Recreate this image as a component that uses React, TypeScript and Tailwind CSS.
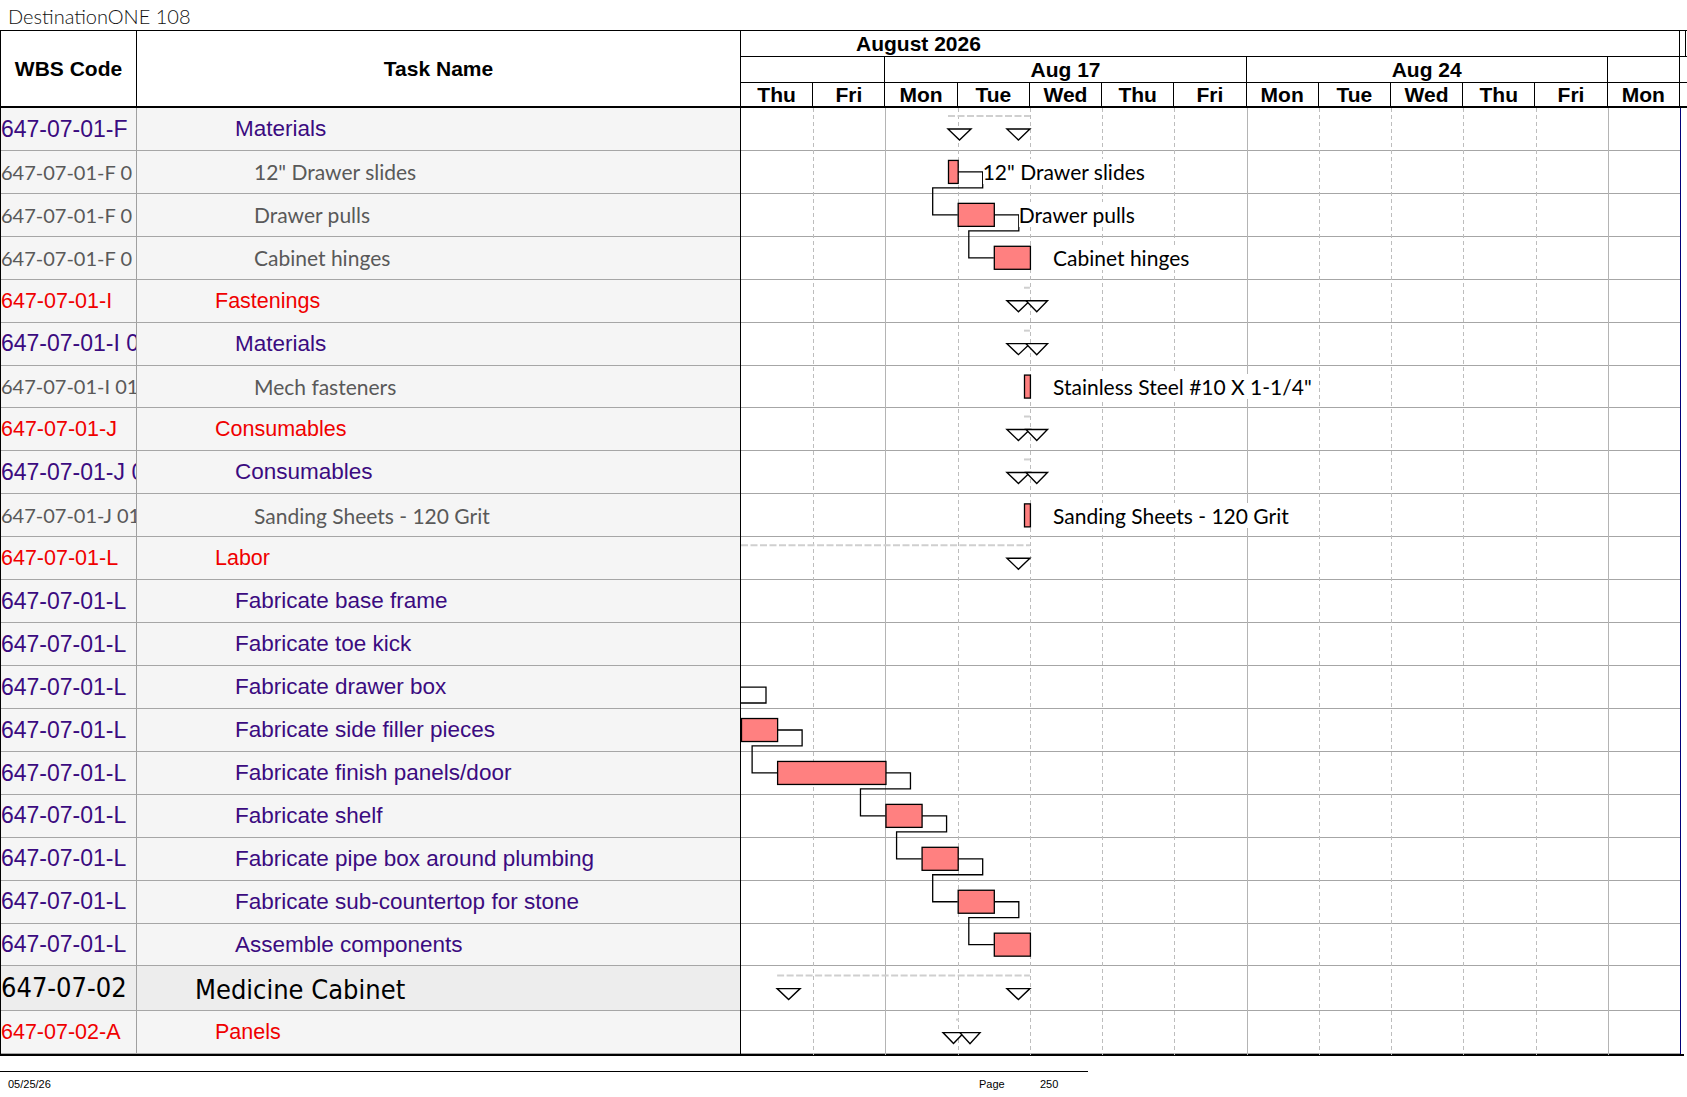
import React from "react";

type Kind = "l2" | "l3" | "task" | "top";

const rows: { wbs: string; name: string; kind: Kind }[] = [
  { wbs: "647-07-01-F", name: "Materials", kind: "l3" },
  { wbs: "647-07-01-F 0", name: '12" Drawer slides', kind: "task" },
  { wbs: "647-07-01-F 0", name: "Drawer pulls", kind: "task" },
  { wbs: "647-07-01-F 0", name: "Cabinet hinges", kind: "task" },
  { wbs: "647-07-01-I", name: "Fastenings", kind: "l2" },
  { wbs: "647-07-01-I 0", name: "Materials", kind: "l3" },
  { wbs: "647-07-01-I 01", name: "Mech fasteners", kind: "task" },
  { wbs: "647-07-01-J", name: "Consumables", kind: "l2" },
  { wbs: "647-07-01-J 0", name: "Consumables", kind: "l3" },
  { wbs: "647-07-01-J 01", name: "Sanding Sheets - 120 Grit", kind: "task" },
  { wbs: "647-07-01-L", name: "Labor", kind: "l2" },
  { wbs: "647-07-01-L", name: "Fabricate base frame", kind: "l3" },
  { wbs: "647-07-01-L", name: "Fabricate toe kick", kind: "l3" },
  { wbs: "647-07-01-L", name: "Fabricate drawer box", kind: "l3" },
  { wbs: "647-07-01-L", name: "Fabricate side filler pieces", kind: "l3" },
  { wbs: "647-07-01-L", name: "Fabricate finish panels/door", kind: "l3" },
  { wbs: "647-07-01-L", name: "Fabricate shelf", kind: "l3" },
  { wbs: "647-07-01-L", name: "Fabricate pipe box around plumbing", kind: "l3" },
  { wbs: "647-07-01-L", name: "Fabricate sub-countertop for stone", kind: "l3" },
  { wbs: "647-07-01-L", name: "Assemble components", kind: "l3" },
  { wbs: "647-07-02", name: "Medicine Cabinet", kind: "top" },
  { wbs: "647-07-02-A", name: "Panels", kind: "l2" },
];

const wbsClass: Record<Kind, string> = {
  l2: "font-['Liberation_Sans',Arial,sans-serif] text-[21.5px] text-[#f00000]",
  l3: "font-['Liberation_Sans',Arial,sans-serif] text-[23px] text-[#3b0b80]",
  task: "font-['Lato',sans-serif] text-[20px] text-[#595959]",
  top: "font-['DejaVu_Sans_Condensed','DejaVu_Sans',sans-serif] text-[27px] text-black",
};

const nameClass: Record<Kind, string> = {
  l2: "pl-[78px] font-['Liberation_Sans',Arial,sans-serif] text-[21.5px] text-[#f00000]",
  l3: "pl-[98px] font-['Liberation_Sans',Arial,sans-serif] text-[22.5px] text-[#3b0b80]",
  task: "pl-[117px] font-['Lato',sans-serif] text-[21px] text-[#595959]",
  top: "pl-[58px] pt-[4px] font-['DejaVu_Sans_Condensed','DejaVu_Sans',sans-serif] text-[27px] text-black",
};

// chart geometry, local to the chart body (origin at x=741, y=108)
const D = 939 / 13;
const RH = 42.93;
const hd = (n: number) => (D * n) / 2;
const top = (k: number) => (k <= 20 ? k * RH : 20 * RH + 45);
const mid = (k: number) => top(k) + 21;

const bars: { k: number; x1: number; x2: number }[] = [
  { k: 1, x1: 207, x2: hd(6) },
  { k: 2, x1: hd(6), x2: hd(7) },
  { k: 3, x1: hd(7), x2: hd(8) },
  { k: 6, x1: 283, x2: hd(8) },
  { k: 9, x1: 283, x2: hd(8) },
  { k: 14, x1: 0, x2: hd(1) },
  { k: 15, x1: hd(1), x2: hd(4) },
  { k: 16, x1: hd(4), x2: hd(5) },
  { k: 17, x1: hd(5), x2: hd(6) },
  { k: 18, x1: hd(6), x2: hd(7) },
  { k: 19, x1: hd(7), x2: hd(8) },
];

// finish-to-start links: predecessor row/end x -> successor row/start x
const links: { a: number; ax: number; b: number; bx: number }[] = [
  { a: 1, ax: hd(6), b: 2, bx: hd(6) },
  { a: 2, ax: hd(7), b: 3, bx: hd(7) },
  { a: 13, ax: 0, b: 14, bx: 0 },
  { a: 14, ax: hd(1), b: 15, bx: hd(1) },
  { a: 15, ax: hd(4), b: 16, bx: hd(4) },
  { a: 16, ax: hd(5), b: 17, bx: hd(5) },
  { a: 17, ax: hd(6), b: 18, bx: hd(6) },
  { a: 18, ax: hd(7), b: 19, bx: hd(7) },
];

const summaries: { k: number; from: number; to: number; tris: [number, number][]; dy?: number }[] = [
  { k: 0, from: 207, to: hd(8), tris: [[207, 23], [hd(8) - 23, 23]] },
  { k: 4, from: 283, to: hd(8), tris: [[hd(8) - 23, 23], [285, 21.5]] },
  { k: 5, from: 283, to: hd(8), tris: [[hd(8) - 23, 23], [285, 21.5]] },
  { k: 7, from: 283, to: hd(8), tris: [[hd(8) - 23, 23], [285, 21.5]] },
  { k: 8, from: 283, to: hd(8), tris: [[hd(8) - 23, 23], [285, 21.5]] },
  { k: 10, from: 0, to: hd(8), tris: [[hd(8) - 23, 23]] },
  { k: 20, from: hd(1), to: hd(8), tris: [[hd(1), 23], [hd(8) - 23, 23]], dy: 1 },
  { k: 21, from: 215, to: 218, tris: [[202, 21], [219, 20]] },
];

const labels: { k: number; x: number; text: string }[] = [
  { k: 1, x: hd(6) + 25, text: '12" Drawer slides' },
  { k: 2, x: hd(7) + 25, text: "Drawer pulls" },
  { k: 3, x: 312, text: "Cabinet hinges" },
  { k: 6, x: 312, text: 'Stainless Steel #10 X 1-1/4"' },
  { k: 9, x: 312, text: "Sanding Sheets - 120 Grit" },
];

const days = ["Thu", "Fri", "Mon", "Tue", "Wed", "Thu", "Fri", "Mon", "Tue", "Wed", "Thu", "Fri", "Mon"];

export default function App() {
  return (
    <div className="h-[1097px] w-[1687px] overflow-hidden bg-white font-['Liberation_Sans',Arial,sans-serif] text-black">
      <div className="flex h-[30px] items-center pl-[8px] pt-[1px] font-['Lato',sans-serif] text-[20px] font-light text-[#111]">
        DestinationONE 108
      </div>

      <div className="flex h-[78px] w-[1687px] border-t border-b-2 border-black">
        <div className="flex w-[137px] items-center justify-center border-x border-black text-[21px] font-bold">
          WBS Code
        </div>
        <div className="flex w-[603px] items-center justify-center text-[21px] font-bold">Task Name</div>
        <div className="flex w-[947px] flex-col border-l border-black text-[21px] font-bold">
          <div className="flex h-[26px] border-b border-black">
            <div className="w-[939px] border-r border-black pl-[115px] leading-[25px]">August 2026</div>
            <div className="w-[6px] border-r border-black" />
          </div>
          <div className="flex h-[26px] border-b border-black">
            <div className="w-[144.46px] border-r border-black" />
            <div className="w-[361.15px] border-r border-black text-center leading-[25px]">Aug 17</div>
            <div className="w-[361.15px] border-r border-black text-center leading-[25px]">Aug 24</div>
            <div className="w-[72.23px] border-r border-black" />
          </div>
          <div className="flex h-[23px]">
            {days.map((d, i) => (
              <div key={i} className="w-[72.23px] border-r border-black text-center leading-[23px]">
                {d}
              </div>
            ))}
          </div>
        </div>
      </div>

      <div className="flex w-[1684px] border-b-2 border-black">
        <div className="w-[740px] border-l border-black">
          {rows.map((r, i) => (
            <div
              key={i}
              className={`flex items-center border-b border-[#a6a6a6] ${
                r.kind === "top" ? "h-[45px] bg-[#ededed]" : "h-[42.93px] bg-[#f5f5f5]"
              }`}
            >
              <div
                className={`flex h-full w-[136px] items-center overflow-hidden whitespace-nowrap border-r border-[#a0a0a0] ${wbsClass[r.kind]}`}
              >
                {r.wbs}
              </div>
              <div className={`flex-1 whitespace-nowrap ${nameClass[r.kind]}`}>{r.name}</div>
            </div>
          ))}
        </div>

        <div className="relative w-[941px] border-l border-r border-l-black border-r-[#00007a] bg-white">
          {rows.map((r, i) => (
            <div
              key={i}
              className={`border-b border-[#a6a6a6] ${r.kind === "top" ? "h-[45px]" : "h-[42.93px]"}`}
            />
          ))}

          <svg className="absolute left-0 top-0" width={939} height={947} viewBox="0 0 939 947">
            {Array.from({ length: 12 }, (_, j) => {
              const i = j + 1;
              const x = Math.round(D * i) + 0.5;
              const solid = i === 2 || i === 7 || i === 12;
              return (
                <line
                  key={i}
                  x1={x}
                  x2={x}
                  y1={0}
                  y2={947}
                  stroke={solid ? "#b4b4b4" : "#bdbdbd"}
                  strokeWidth={1}
                  strokeDasharray={solid ? undefined : "4 3"}
                />
              );
            })}

            {summaries.map((s) => (
              <g key={s.k}>
                <line
                  x1={s.from}
                  x2={s.to}
                  y1={top(s.k) + 8 + (s.dy ?? 0)}
                  y2={top(s.k) + 8 + (s.dy ?? 0)}
                  stroke="#cfcfcf"
                  strokeWidth={2}
                  strokeDasharray="7 2.5"
                />
                {s.tris.map(([x, w], j) => {
                  const y = top(s.k) + 21 + (s.dy ?? 0);
                  return (
                    <path
                      key={j}
                      d={`M${x} ${y} L${x + w} ${y} L${x + w / 2} ${y + 11} Z`}
                      fill="white"
                      stroke="black"
                      strokeWidth={1.4}
                    />
                  );
                })}
              </g>
            ))}

            {links.map((l, i) => {
              const turnY = top(l.a + 1) - 6;
              const pts = [
                [l.ax, mid(l.a)],
                [l.ax + 25, mid(l.a)],
                [l.ax + 25, turnY],
                [l.bx - 25, turnY],
                [l.bx - 25, mid(l.b)],
                [l.bx, mid(l.b)],
              ];
              return (
                <polyline
                  key={i}
                  points={pts.map((p) => p.join(",")).join(" ")}
                  fill="none"
                  stroke="black"
                  strokeWidth={1.3}
                />
              );
            })}

            {bars.map((b, i) => (
              <rect
                key={i}
                x={b.x1 + 0.5}
                y={top(b.k) + 9.5}
                width={b.x2 - b.x1}
                height={23}
                fill="#ff8080"
                stroke="black"
                strokeWidth={1.3}
              />
            ))}
          </svg>

          {labels.map((l) => (
            <div
              key={l.k}
              className="absolute h-[25px] whitespace-nowrap bg-white font-['Lato',sans-serif] text-[21px] leading-[25px] text-black"
              style={{ left: l.x, top: mid(l.k) - 12.5 }}
            >
              {l.text}
            </div>
          ))}
        </div>
      </div>

      <div className="mt-[15px] flex w-[1088px] border-t border-black pt-[6px] text-[11px] leading-[12px]">
        <span className="w-[979px] pl-[8px]">05/25/26</span>
        <span className="w-[61px]">Page</span>
        <span>250</span>
      </div>
    </div>
  );
}
